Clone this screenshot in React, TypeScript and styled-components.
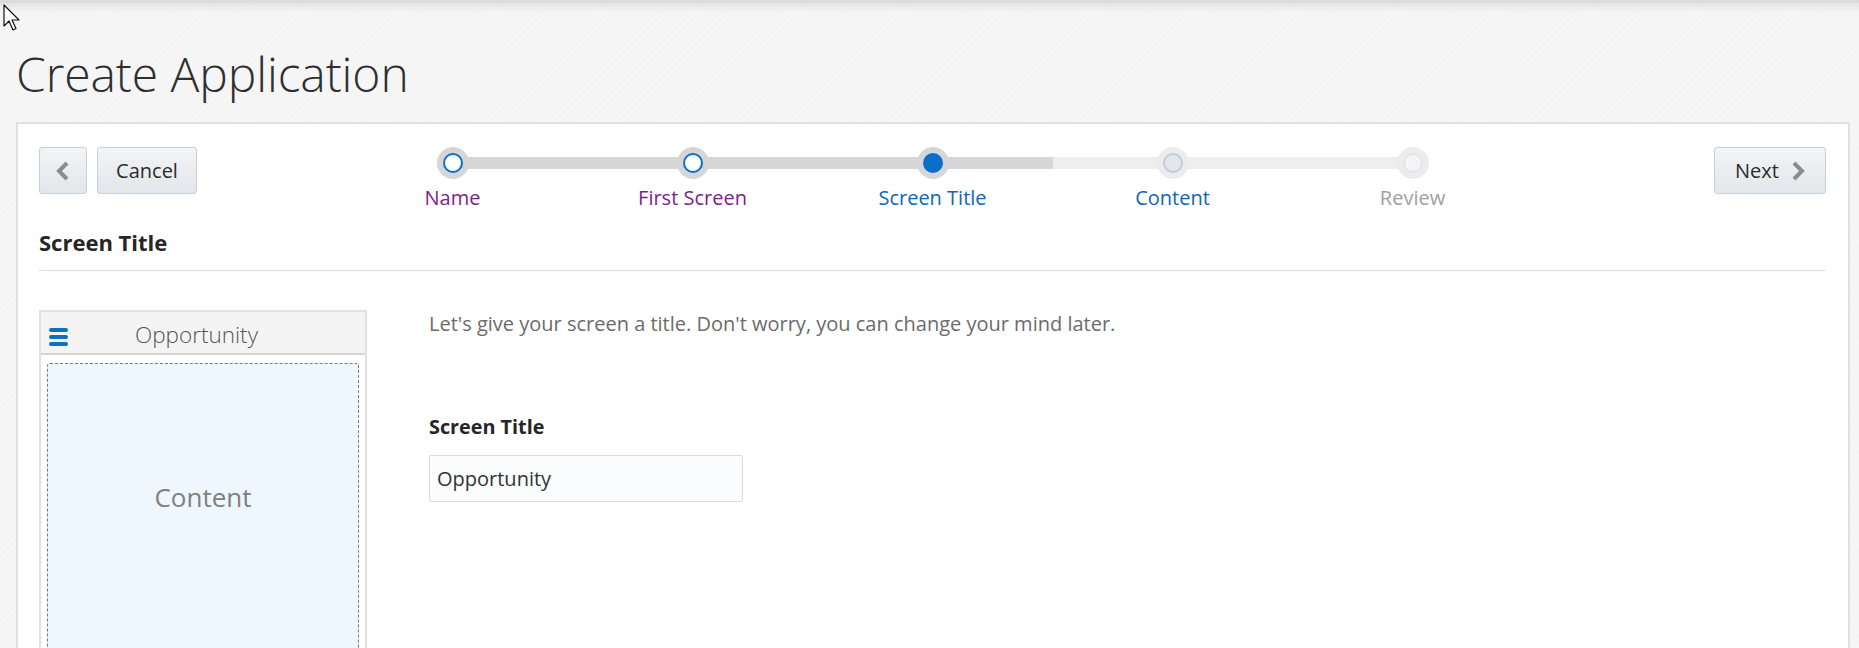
import React from 'react';
import styled, { createGlobalStyle } from 'styled-components';

const Global = createGlobalStyle`
  html, body { margin: 0; padding: 0; }
  body {
    background: #f6f6f6;
    font-family: "Open Sans", "Noto Sans", sans-serif;
    overflow: hidden;
  }
  * { box-sizing: border-box; }
`;

const Page = styled.div`
  position: relative;
  width: 1859px;
  height: 648px;
  overflow: hidden;
  background-color: #f6f6f6;
  background-image: repeating-linear-gradient(135deg, rgba(0,0,0,0.007) 0 2px, transparent 2px 5px);
  border-top: 3px solid #dcdcdc;
  padding: 0 9px 0 16px;
  &::before {
    content: '';
    position: absolute;
    left: 0; right: 0; top: 0;
    height: 10px;
    background: linear-gradient(rgba(0,0,0,0.07), rgba(0,0,0,0));
  }
`;

const Title = styled.h1`
  margin: 38px 0 16px 0;
  font-family: "Open Sans", sans-serif;
  font-weight: 300;
  font-size: 48px;
  line-height: 65px;
  color: #2f2f2f;
  letter-spacing: -0.1px;
`;

const Panel = styled.div`
  background: #ffffff;
  border: 2px solid #dfe0e4;
  padding: 23px 22px 0 21px;
  height: 600px;
`;

const TopRow = styled.div`
  display: grid;
  grid-template-columns: 1fr 1200px 1fr;
  align-items: start;
`;

const ButtonGroup = styled.div<{ $end?: boolean }>`
  display: flex;
  gap: 10px;
  justify-content: ${p => (p.$end ? 'flex-end' : 'flex-start')};
`;

const Button = styled.button<{ $w: number }>`
  height: 47px;
  width: ${p => p.$w}px;
  border: 1px solid #c6d0d9;
  border-radius: 3px;
  background: linear-gradient(#f2f4f6, #e3e6ea);
  font-family: "Open Sans", sans-serif;
  font-size: 20px;
  color: #2b2b2b;
  display: flex;
  align-items: center;
  justify-content: center;
  gap: 12px;
  padding: 0;
  cursor: pointer;
`;

const Chevron = ({ dir }: { dir: 'left' | 'right' }) => (
  <svg width="14" height="20" viewBox="0 0 14 20">
    <polyline
      points={dir === 'left' ? '11,2 3,10 11,18' : '3,2 11,10 3,18'}
      fill="none"
      stroke="#8c8c8c"
      strokeWidth="4"
      strokeLinejoin="miter"
    />
  </svg>
);

const Stepper = styled.div`
  display: flex;
`;

type StepState = 'done' | 'current' | 'next' | 'last';

const Step = styled.div<{ $leftDark: boolean; $rightDark: boolean; $first: boolean; $last: boolean }>`
  position: relative;
  width: 240px;
  display: flex;
  flex-direction: column;
  align-items: center;
  &::before, &::after {
    content: '';
    position: absolute;
    top: 10px;
    height: 12px;
    width: 50%;
  }
  &::before {
    left: 0;
    background: ${p => (p.$first ? 'transparent' : p.$leftDark ? '#d5d6d8' : '#eeeeee')};
  }
  &::after {
    right: 0;
    background: ${p => (p.$last ? 'transparent' : p.$rightDark ? '#d5d6d8' : '#eeeeee')};
  }
`;

const Ring = styled.div<{ $dark: boolean }>`
  position: relative;
  z-index: 1;
  width: 32px;
  height: 32px;
  border-radius: 50%;
  background: ${p => (p.$dark ? '#d5d6d8' : '#ececec')};
  display: flex;
  align-items: center;
  justify-content: center;
`;

const Dot = styled.div<{ $state: StepState }>`
  width: 20px;
  height: 20px;
  border-radius: 50%;
  border: 2px solid
    ${p =>
      p.$state === 'done' || p.$state === 'current'
        ? '#0a6fcb'
        : p.$state === 'next'
        ? '#c3ccd4'
        : '#e1e6ea'};
  background: ${p =>
    p.$state === 'done'
      ? '#ffffff'
      : p.$state === 'current'
      ? '#0a6fcb'
      : p.$state === 'next'
      ? '#e3e7eb'
      : '#f3f5f7'};
`;

const StepLabel = styled.div<{ $state: StepState }>`
  margin-top: 6px;
  font-size: 20px;
  line-height: 26px;
  color: ${p =>
    p.$state === 'done'
      ? '#801e8c'
      : p.$state === 'last'
      ? '#9f9f9f'
      : '#0e66b8'};
`;

const SectionHeading = styled.h2`
  margin: 16px 0 0 0;
  padding-bottom: 13px;
  border-bottom: 1px solid #dde1e6;
  font-size: 22px;
  line-height: 30px;
  font-weight: 700;
  color: #262626;
`;

const Body = styled.div`
  display: grid;
  grid-template-columns: 328px 1fr;
  column-gap: 62px;
  margin-top: 39px;
`;

const Preview = styled.div`
  border: 2px solid #e0e0e5;
  height: 420px;
  background: #ffffff;
`;

const PreviewHeader = styled.div`
  height: 43px;
  background: #f4f4f4;
  border-bottom: 2px solid #d5d5d8;
  display: flex;
  align-items: center;
  padding: 4px 40px 0 8px;
`;

const Hamburger = styled.div`
  width: 19px;
  display: flex;
  flex-direction: column;
  gap: 3px;
  margin-top: 4px;
  span {
    display: block;
    height: 4px;
    border-radius: 2px;
    background: #0a71c9;
  }
`;

const PreviewTitle = styled.div`
  flex: 1;
  text-align: center;
  font-weight: 300;
  font-size: 22.5px;
  color: #555555;
`;

const DropZone = styled.div`
  margin: 8px 6px 0 6px;
  height: 400px;
  border: 1px dashed #7a7a7a;
  border-radius: 3px;
  background: #eff7fe;
  padding-top: 115px;
  text-align: center;
  font-size: 26px;
  line-height: 36px;
  color: #808080;
`;

const Form = styled.div`
  display: flex;
  flex-direction: column;
  align-items: flex-start;
`;

const Intro = styled.p`
  margin: 1px 0 0 0;
  font-size: 20px;
  line-height: 26px;
  color: #6b6b6b;
`;

const FieldLabel = styled.label`
  margin-top: 78px;
  font-size: 19.8px;
  line-height: 24px;
  font-weight: 700;
  color: #262626;
`;

const Input = styled.input`
  margin-top: 16px;
  width: 314px;
  height: 47px;
  border: 1px solid #d6dce1;
  border-radius: 2px;
  background: #fafcfd;
  padding: 0 7px;
  font-family: "Open Sans", sans-serif;
  font-size: 20px;
  color: #333333;
  outline: none;
`;

const Cursor = styled.svg`
  position: absolute;
  left: 3px;
  top: 1px;
  z-index: 5;
`;

const steps: { label: string; state: StepState }[] = [
  { label: 'Name', state: 'done' },
  { label: 'First Screen', state: 'done' },
  { label: 'Screen Title', state: 'current' },
  { label: 'Content', state: 'next' },
  { label: 'Review', state: 'last' },
];

export default function App() {
  const currentIndex = 2;
  return (
    <>
      <Global />
      <Page>
        <Cursor width="19" height="27" viewBox="0 0 19 27">
          <path
            d="M1 1 L1 22 L6 17 L10 26 L13 24.5 L9 16 L16 16 Z"
            fill="#ffffff"
            stroke="#111111"
            strokeWidth="1.2"
            strokeLinejoin="round"
          />
        </Cursor>
        <Title>Create Application</Title>
        <Panel>
          <TopRow>
            <ButtonGroup>
              <Button $w={48} aria-label="Back">
                <Chevron dir="left" />
              </Button>
              <Button $w={100}>Cancel</Button>
            </ButtonGroup>
            <Stepper>
              {steps.map((s, i) => (
                <Step
                  key={s.label}
                  $first={i === 0}
                  $last={i === steps.length - 1}
                  $leftDark={i <= currentIndex}
                  $rightDark={i <= currentIndex}
                >
                  <Ring $dark={i <= currentIndex}>
                    <Dot $state={s.state} />
                  </Ring>
                  <StepLabel $state={s.state}>{s.label}</StepLabel>
                </Step>
              ))}
            </Stepper>
            <ButtonGroup $end>
              <Button $w={112}>
                Next
                <Chevron dir="right" />
              </Button>
            </ButtonGroup>
          </TopRow>
          <SectionHeading>Screen Title</SectionHeading>
          <Body>
            <Preview>
              <PreviewHeader>
                <Hamburger>
                  <span />
                  <span />
                  <span />
                </Hamburger>
                <PreviewTitle>Opportunity</PreviewTitle>
              </PreviewHeader>
              <DropZone>Content</DropZone>
            </Preview>
            <Form>
              <Intro>Let's give your screen a title. Don't worry, you can change your mind later.</Intro>
              <FieldLabel htmlFor="screen-title">Screen Title</FieldLabel>
              <Input id="screen-title" defaultValue="Opportunity" />
            </Form>
          </Body>
        </Panel>
      </Page>
    </>
  );
}
